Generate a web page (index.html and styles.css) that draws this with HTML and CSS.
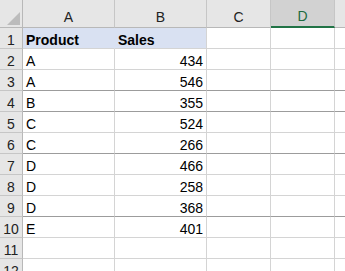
FILE: index.html
```html
<!DOCTYPE html>
<html lang="en">
<head>
    <meta charset="UTF-8">
    <title>Sheet1</title>
    <link rel="stylesheet" href="styles.css">
</head>
<body>
    <div class="sheet">
        <div class="corner"></div>
        <div class="hd">A</div>
        <div class="hd">B</div>
        <div class="hd">C</div>
        <div class="hd sel">D</div>
        <div class="hd last"></div>

        <div class="rh">1</div>
        <div class="c fill bold joined">Product</div>
        <div class="c fill bold">Sales</div>
        <div class="c"></div>
        <div class="c"></div>
        <div class="c last"></div>

        <div class="rh">2</div>
        <div class="c">A</div>
        <div class="c num">434</div>
        <div class="c"></div>
        <div class="c"></div>
        <div class="c last"></div>

        <div class="rh">3</div>
        <div class="c grp">A</div>
        <div class="c num grp">546</div>
        <div class="c grp"></div>
        <div class="c grp"></div>
        <div class="c grp last"></div>

        <div class="rh">4</div>
        <div class="c grp">B</div>
        <div class="c num grp">355</div>
        <div class="c grp"></div>
        <div class="c grp"></div>
        <div class="c grp last"></div>

        <div class="rh">5</div>
        <div class="c">C</div>
        <div class="c num">524</div>
        <div class="c"></div>
        <div class="c"></div>
        <div class="c last"></div>

        <div class="rh">6</div>
        <div class="c grp">C</div>
        <div class="c num grp">266</div>
        <div class="c grp"></div>
        <div class="c grp"></div>
        <div class="c grp last"></div>

        <div class="rh">7</div>
        <div class="c">D</div>
        <div class="c num">466</div>
        <div class="c"></div>
        <div class="c"></div>
        <div class="c last"></div>

        <div class="rh">8</div>
        <div class="c">D</div>
        <div class="c num">258</div>
        <div class="c"></div>
        <div class="c"></div>
        <div class="c last"></div>

        <div class="rh">9</div>
        <div class="c grp">D</div>
        <div class="c num grp">368</div>
        <div class="c grp"></div>
        <div class="c grp"></div>
        <div class="c grp last"></div>

        <div class="rh">10</div>
        <div class="c">E</div>
        <div class="c num">401</div>
        <div class="c"></div>
        <div class="c"></div>
        <div class="c last"></div>

        <div class="rh">11</div>
        <div class="c"></div>
        <div class="c"></div>
        <div class="c"></div>
        <div class="c"></div>
        <div class="c last"></div>

        <div class="rh">12</div>
        <div class="c"></div>
        <div class="c"></div>
        <div class="c"></div>
        <div class="c"></div>
        <div class="c last"></div>
    </div>
</body>
</html>
```
FILE: styles.css
```css
body {
    margin: 0;
    background-color: #fff;
    font-family: "Liberation Sans", Arial, sans-serif;
    font-size: 14px;
    color: #000;
    overflow: hidden;
}

.sheet {
    display: grid;
    grid-template-columns: 23px 92px 92px 64px 64px 1fr;
    grid-template-rows: 28px;
    grid-auto-rows: 21px;
    width: 345px;
}

.sheet > div {
    box-sizing: border-box;
    display: flex;
    align-items: flex-end;
    line-height: 16px;
    white-space: nowrap;
    overflow: hidden;
}

.corner {
    justify-content: flex-end;
    padding: 0 2px 2px 0;
    background-color: #e6e6e6;
    border-right: 1px solid #b8b8b8;
    border-bottom: 1px solid #b8b8b8;
}

.corner::after {
    content: "";
    display: block;
    width: 13px;
    height: 13px;
    background-color: #bcbcbc;
    clip-path: polygon(100% 0, 100% 100%, 0 100%);
}

.hd {
    justify-content: center;
    padding-bottom: 2px;
    background-color: #e6e6e6;
    color: #222;
    border-right: 1px solid #c6c6c6;
    border-bottom: 1px solid #b8b8b8;
}

.hd.sel {
    background-color: #d2d2d2;
    color: #1d6b40;
    border-bottom: 2px solid #217346;
}

.rh {
    justify-content: center;
    background-color: #e6e6e6;
    color: #222;
    border-right: 1px solid #b8b8b8;
    border-bottom: 1px solid #c6c6c6;
}

.c {
    padding: 0 3px;
    border-right: 1px solid #d4d4d4;
    border-bottom: 1px solid #d4d4d4;
}

.sheet > .last {
    border-right: none;
}

.num {
    justify-content: flex-end;
}

.bold {
    font-weight: bold;
}

.fill {
    background-color: #d9e1f2;
}

.fill.joined {
    border-right-color: #d9e1f2;
}

.c.grp {
    border-bottom-color: #9c9c9c;
}
```
